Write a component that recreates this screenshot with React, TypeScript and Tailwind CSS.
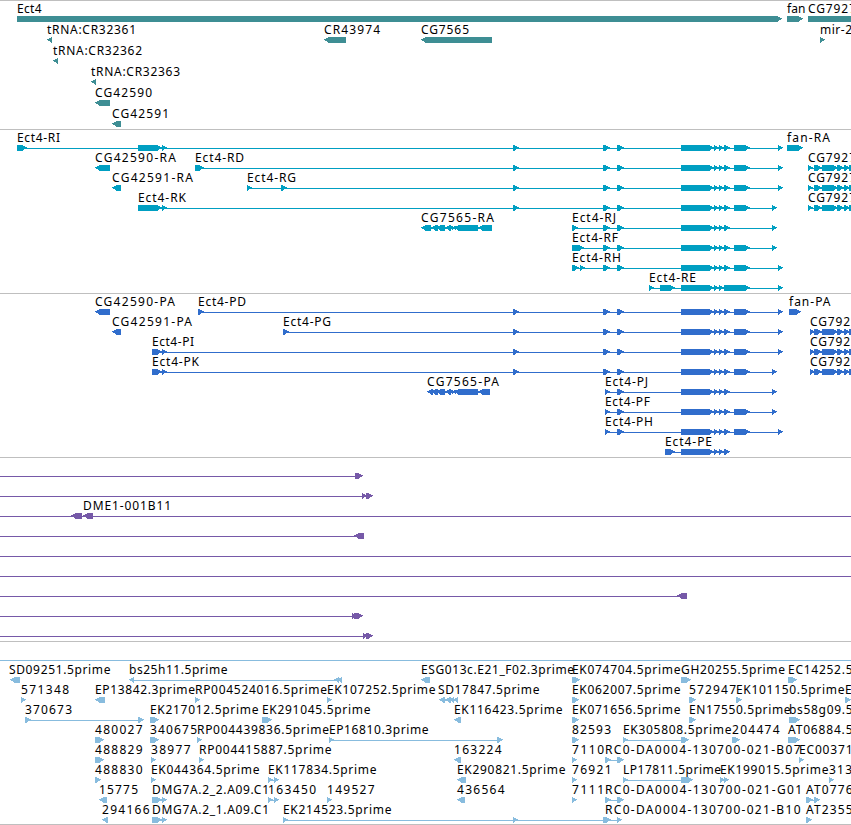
type Span = [number, number];

interface Feature {
  label?: string;
  x: number;
  width?: number;
  left?: boolean;
  line?: Span;
  blocks: Span[];
}

interface TrackData {
  name: string;
  color: string;
  className: string;
  rowClass: string;
  rows: Feature[][];
}

const f = (label: string, x: number, width: number, blocks: Span[], left = false): Feature => ({
  label,
  x,
  width,
  blocks,
  left,
});

const bare = (line: Span, blocks: Span[] = [], left = false): Feature => ({
  x: line[0],
  line,
  blocks,
  left,
});

// Exons shared by the Ect4 transcripts
const MID: Span[] = [[603, 610], [617, 624]];
const CORE: Span[] = [[681, 714], [714, 719], [719, 724], [724, 730]];
const TAIL: Span[] = [[734, 750]];
const LONG: Span[] = [[513, 519], ...MID, ...CORE, ...TAIL];
const END_A: Span = [778, 783];
const END_B: Span = [772, 777];

const CG7927_R: Span[] = [[808, 813], [814, 822], [822, 838], [837, 844], [844, 850], [849, 860]];
const CG7927_P: Span[] = [[810, 815], [814, 822], [822, 838], [837, 844], [844, 850], [849, 860]];
const CG7565: Span[] = [[431, 438], [436, 445], [445, 451], [449, 453], [452, 456], [454, 478]];

const TRACKS: TrackData[] = [
  {
    name: "genes",
    color: "#3e8e94",
    className: "h-[129px]",
    rowClass: "h-[21px]",
    rows: [
      [
        f("Ect4", 17, 24.5, [[17, 782]]),
        f("fan", 787, 18.5, [[787, 803]]),
        f("CG7927", 808, 48, [[808, 870]]),
      ],
      [
        f("tRNA:CR32361", 47, 89, [[47, 52]], true),
        f("CR43974", 324, 56, [[324, 346]], true),
        f("CG7565", 421, 48, [[421, 492]], true),
        f("mir-2", 820, 32, [[820, 825]]),
      ],
      [f("tRNA:CR32362", 53, 89, [[53, 58]], true)],
      [f("tRNA:CR32363", 91, 89, [[91, 96]], true)],
      [f("CG42590", 95, 57, [[95, 110]], true)],
      [f("CG42591", 112, 57, [[112, 121]], true)],
    ],
  },
  {
    name: "transcripts",
    color: "#009fc2",
    className: "h-[164px]",
    rowClass: "h-5",
    rows: [
      [
        f("Ect4-RI", 17, 43, [[17, 27], [138, 162], [162, 167], ...LONG, END_A]),
        f("fan-RA", 787, 43, [[787, 803]]),
      ],
      [
        f("CG42590-RA", 95, 81, [[95, 110]], true),
        f("Ect4-RD", 195, 49, [[195, 204], ...LONG, END_A]),
        f("CG7927", 808, 48, CG7927_R),
      ],
      [
        f("CG42591-RA", 112, 81, [[112, 121]], true),
        f("Ect4-RG", 247, 49, [[247, 252], [281, 287], ...LONG, END_A]),
        f("CG7927", 808, 48, CG7927_R),
      ],
      [
        f("Ect4-RK", 138, 48, [[138, 162], [162, 167], ...LONG, END_B]),
        f("CG7927", 808, 48, CG7927_R),
      ],
      [
        f("CG7565-RA", 421, 73, [[421, 431], ...CG7565, [478, 492]], true),
        f("Ect4-RJ", 572, 44, [[572, 578], ...MID, ...CORE, END_B]),
      ],
      [f("Ect4-RF", 572, 46, [[572, 584], ...MID, ...CORE, ...TAIL, END_B])],
      [f("Ect4-RH", 572, 49, [[572, 579], [580, 585], ...MID, ...CORE, ...TAIL, END_A])],
      [
        f("Ect4-RE", 649, 47, [
          [649, 654], [660, 675], [681, 714], [714, 719], [719, 724], [724, 750], END_A,
        ]),
      ],
    ],
  },
  {
    name: "proteins",
    color: "#306dcc",
    className: "h-[164px]",
    rowClass: "h-5",
    rows: [
      [
        f("CG42590-PA", 95, 80, [[95, 110]], true),
        f("Ect4-PD", 198, 48, [[198, 204], ...LONG, END_A]),
        f("fan-PA", 789, 41.5, [[789, 801]]),
      ],
      [
        f("CG42591-PA", 112, 80, [[112, 121]], true),
        f("Ect4-PG", 283, 48, [[283, 289], ...LONG, END_A]),
        f("CG792", 810, 40, CG7927_P),
      ],
      [
        f("Ect4-PI", 152, 42, [[152, 162], [162, 167], ...LONG, END_A]),
        f("CG792", 810, 40, CG7927_P),
      ],
      [
        f("Ect4-PK", 152, 47, [[152, 162], [162, 167], ...LONG, END_B]),
        f("CG792", 810, 40, CG7927_P),
      ],
      [
        f("CG7565-PA", 427, 72, [[427, 433], ...CG7565, [478, 490]], true),
        f("Ect4-PJ", 605, 43, [[605, 610], [617, 624], ...CORE, END_B]),
      ],
      [f("Ect4-PF", 605, 45, [[605, 610], [617, 624], ...CORE, ...TAIL, END_B])],
      [f("Ect4-PH", 605, 48, [[605, 610], [617, 624], ...CORE, ...TAIL, END_A])],
      [f("Ect4-PE", 665, 47, [[665, 675], ...CORE])],
    ],
  },
  {
    name: "clones",
    color: "#7659a8",
    className: "h-[184px]",
    rowClass: "h-5",
    rows: [
      [bare([0, 358], [[355, 363]])],
      [bare([0, 364], [[362, 367], [366, 373]])],
      [
        bare([0, 75], [[71, 82]], true),
        { label: "DME1-001B11", x: 83, width: 88, line: [82, 851], blocks: [[83, 93]], left: true },
      ],
      [bare([0, 360], [[354, 364]], true)],
      [bare([0, 851])],
      [bare([0, 851])],
      [bare([0, 682], [[677, 687]], true)],
      [bare([0, 358], [[352, 357], [354, 363]])],
      [bare([0, 366], [[363, 368], [366, 373]])],
    ],
  },
  {
    name: "ests",
    color: "#88bcde",
    className: "h-[184px] border-b",
    rowClass: "h-5",
    rows: [
      [bare([0, 851])],
      [
        f("SD09251.5prime", 9, 101.5, [[10, 20]], true),
        f("bs25h11.5prime", 129, 98.5, [[129, 134], [334, 339], [337, 342]], true),
        f("ESG013c.E21_F02.3prime", 421, 153, [[421, 430]], true),
        f("EK074704.5prime", 572, 108.5, [[572, 580]]),
        f("GH20255.5prime", 681, 104, [[681, 691]]),
        f("EC14252.5", 788, 64.5, [[788, 797]]),
      ],
      [
        f("571348", 21, 48, [[21, 26]]),
        f("EP13842.3prime", 95, 100, [[95, 105]], true),
        f("RP004524016.5prime", 195, 132, [[195, 200]]),
        f("EK107252.5prime", 327, 108.5, [[327, 332]]),
        f("SD17847.5prime", 438, 101.5, [[439, 445], [445, 451], [449, 454], [453, 458]], true),
        f("EK062007.5prime", 572, 108.5, [[572, 579]]),
        f("572947", 689, 47, [[689, 696]]),
        f("EK101150.5prime", 736, 108.5, [[736, 742]]),
        f("E", 845, 6.5, [[845, 851]]),
      ],
      [
        f("370673", 25, 47, [[25, 31], [138, 144]]),
        f("EK217012.5prime", 150, 108.5, [[150, 159]]),
        f("EK291045.5prime", 262, 108.5, [[262, 272]]),
        f("EK116423.5prime", 454, 108.5, [[454, 461]], true),
        f("EK071656.5prime", 572, 108.5, [[572, 579]]),
        f("EN17550.5prime", 689, 101.5, [[689, 696]]),
        f("bs58g09.5", 789, 63.5, [[789, 800]]),
      ],
      [
        f("480027", 95, 47.5, [[95, 104]]),
        f("340675", 150, 47, [[150, 159]]),
        f("RP004439836.5prime", 197, 132, [[197, 202]]),
        f("EP16810.3prime", 329, 99.5, [[329, 334], [497, 503]]),
        f("82593", 572, 39, [[572, 579]]),
        f("EK305808.5prime", 623, 108.5, [[623, 628], [681, 689]]),
        f("204474", 732, 47.5, [[732, 740]]),
        f("AT06884.5", 788, 64.5, [[788, 800]]),
      ],
      [
        f("488829", 95, 47.5, [[95, 104]]),
        f("38977", 151, 39.5, [[151, 156]]),
        f("RP004415887.5prime", 199, 132.5, [[199, 204]]),
        f("163224", 454, 47.5, [[454, 461]], true),
        f("7110", 572, 32, [[572, 577]]),
        f("RC0-DA0004-130700-021-B07", 605, 195.5, [[605, 611], [617, 624]]),
        f("EC00371", 799, 53.5, [[799, 804]]),
      ],
      [
        f("488830", 95, 47.5, [[95, 101]]),
        f("EK044364.5prime", 151, 108.5, [[151, 156]]),
        f("EK117834.5prime", 268, 108.5, [[268, 273], [274, 279]]),
        f("EK290821.5prime", 457, 108.5, [[457, 466]], true),
        f("76921", 572, 39.5, [[572, 577]]),
        f("LP17811.5prime", 623, 98, [[623, 628], [681, 693]]),
        f("EK199015.5prime", 720, 108.5, [[720, 725], [724, 729]]),
        f("313", 829, 23, [[829, 834]]),
      ],
      [
        f("15775", 99, 39, [[99, 107]], true),
        f("DMG7A.2_2.A09.C1", 152, 117, [[152, 162], [162, 167]]),
        f("163450", 268, 48, [[268, 273], [274, 279]]),
        f("149527", 327, 47.5, [[327, 332]]),
        f("436564", 457, 47.5, [[457, 465]], true),
        f("7111", 572, 32, [[572, 577]]),
        f("RC0-DA0004-130700-021-G01", 605, 197, [[605, 611], [617, 624]]),
        f("AT0776", 806, 46.5, [[806, 813], [814, 820]]),
      ],
      [
        f("294166", 102, 47.5, [[102, 108]], true),
        f("DMG7A.2_1.A09.C1", 152, 117, [[152, 162], [162, 167]]),
        f("EK214523.5prime", 283, 108.5, [[283, 288], [513, 518], [603, 610]]),
        f("RC0-DA0004-130700-021-B10", 605, 195.5, [[605, 611], [617, 622]]),
        f("AT2355", 806, 46.5, [[806, 812]]),
      ],
    ],
  },
];

function Block({ span: [a, b], left }: { span: Span; left?: boolean }) {
  // Stepped tip, one step for each of the six pixel rows
  const d = left
    ? `M${b} 13H${a + 4}v1H${a + 2}v1H${a}v1H${a + 1}v1H${a + 3}v1H${a + 4}v1H${b}z`
    : `M${a} 13H${b - 4}v1H${b - 2}v1H${b}v1H${b - 1}v1H${b - 3}v1H${b - 4}v1H${a}z`;
  return <path d={d} shapeRendering="crispEdges" />;
}

function Glyph({ feature }: { feature: Feature }) {
  const { blocks, left, label, x, width } = feature;
  // Blocks of one feature are joined by a thin connector
  const line: Span | null =
    feature.line ?? (blocks.length > 1 ? [blocks[0][0] + 1, blocks[blocks.length - 1][1] - 2] : null);

  return (
    <g>
      {line && <rect x={line[0]} y={16} width={line[1] - line[0]} height={1} />}
      {blocks.map((span, i) => (
        <Block key={i} span={span} left={left} />
      ))}
      {label && (
        <text x={x} y={10} textLength={width} className="fill-black">
          {label}
        </text>
      )}
    </g>
  );
}

function Track({ track }: { track: TrackData }) {
  return (
    <section className={`border-t border-[#bfbfbf] pt-0.5 ${track.className}`}>
      {track.rows.map((row, i) => (
        <div key={i} className={track.rowClass}>
          <svg width={851} height={20} fill={track.color} className="block overflow-visible">
            {row.map((feature, j) => (
              <Glyph key={j} feature={feature} />
            ))}
          </svg>
        </div>
      ))}
    </section>
  );
}

export default function App() {
  return (
    <main className="flex h-[825px] w-[851px] flex-col overflow-hidden bg-white font-['Noto_Sans',sans-serif] text-[12px]">
      {TRACKS.map((track) => (
        <Track key={track.name} track={track} />
      ))}
    </main>
  );
}
